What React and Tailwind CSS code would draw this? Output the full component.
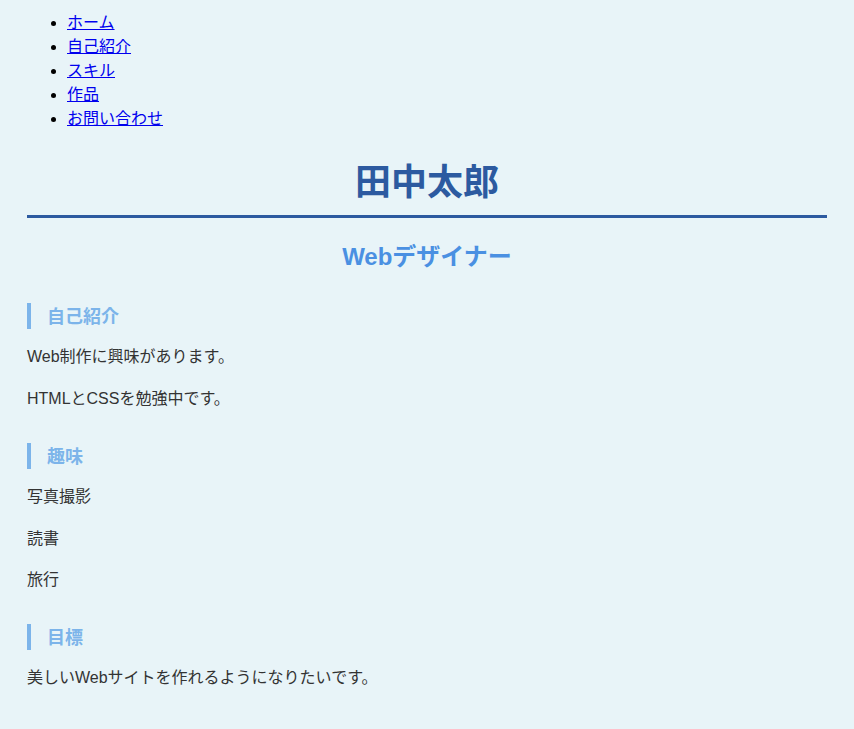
export default function App() {
  const font = "font-['Liberation_Sans','Noto_Sans_CJK_JP',sans-serif]"
  const links = ["ホーム", "自己紹介", "スキル", "作品", "お問い合わせ"]

  return (
    <div className={`min-h-screen bg-[#e8f4f8] text-[#333] ${font}`}>
      <div className="mx-auto max-w-[800px] pb-10">
        <ul className="list-disc pl-10 pt-[11px] text-base leading-6 text-black">
          {links.map((l) => (
            <li key={l}>
              <a href="#" className="text-[#0000ee] underline">
                {l}
              </a>
            </li>
          ))}
        </ul>

        <h1 className="mt-[26px] border-b-[3px] border-[#2c5aa0] pb-[6px] text-center text-[36px] font-bold leading-[52px] text-[#2c5aa0]">
          田中太郎
        </h1>
        <h2 className="mt-[21px] text-center text-2xl font-bold leading-[35px] text-[#4a90e2]">
          Webデザイナー
        </h2>

        <h3 className="mt-[29px] border-l-4 border-[#7cb4ea] pl-4 pt-[3px] text-lg font-bold leading-[23px] text-[#7cb4ea]">
          自己紹介
        </h3>
        <p className="mt-[15px] leading-[25.6px]">Web制作に興味があります。</p>
        <p className="mt-4 leading-[25.6px]">HTMLとCSSを勉強中です。</p>

        <h3 className="mt-8 border-l-4 border-[#7cb4ea] pl-4 pt-[3px] text-lg font-bold leading-[23px] text-[#7cb4ea]">
          趣味
        </h3>
        <p className="mt-[15px] leading-[25.6px]">写真撮影</p>
        <p className="mt-4 leading-[25.6px]">読書</p>
        <p className="mt-4 leading-[25.6px]">旅行</p>

        <h3 className="mt-[31px] border-l-4 border-[#7cb4ea] pl-4 pt-[3px] text-lg font-bold leading-[23px] text-[#7cb4ea]">
          目標
        </h3>
        <p className="mt-[15px] leading-[25.6px]">美しいWebサイトを作れるようになりたいです。</p>
      </div>
    </div>
  )
}
